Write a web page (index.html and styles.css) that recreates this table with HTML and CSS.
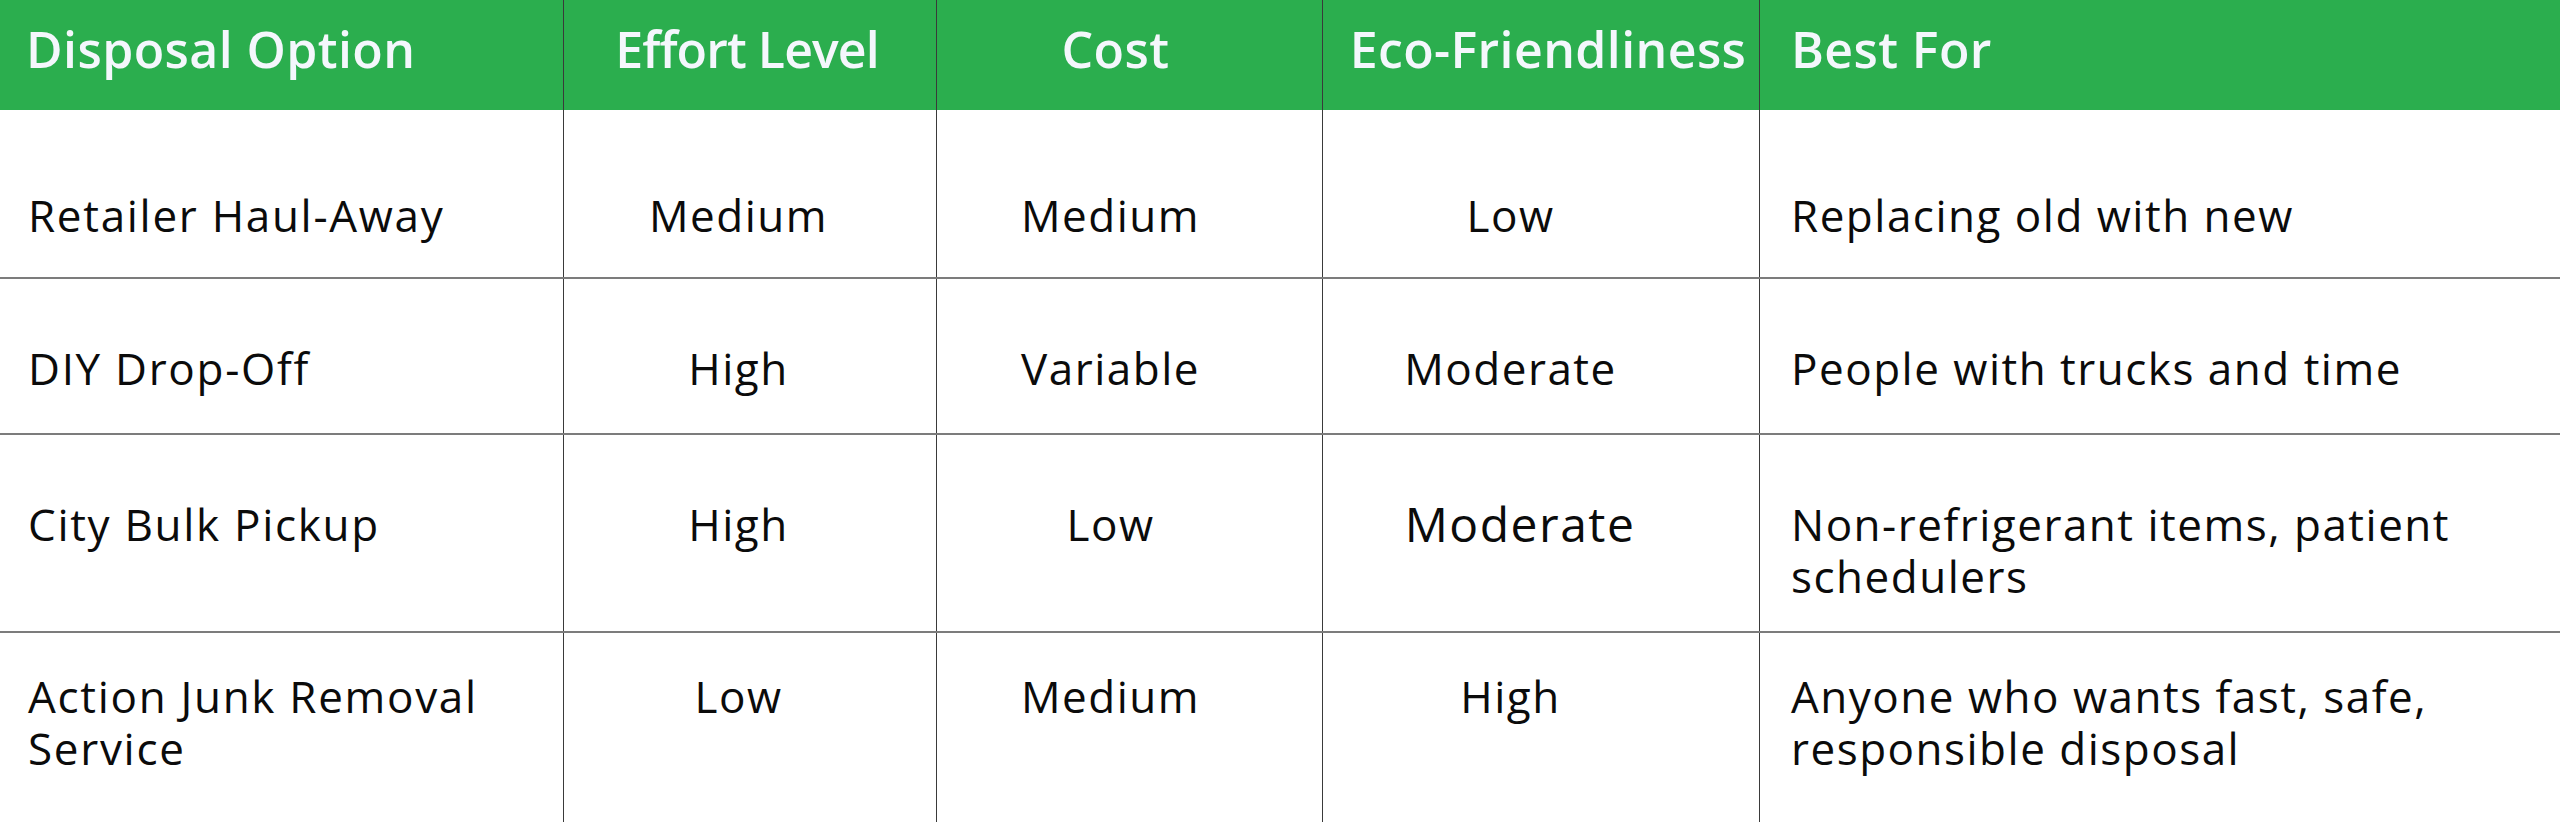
FILE: index.html
```html
<!DOCTYPE html>
<html lang="en">
<head>
<meta charset="utf-8">
<title>Disposal Options Comparison</title>
<link rel="stylesheet" href="styles.css">
</head>
<body>
<div class="tbl">
  <div class="row head">
    <div class="cell c1">Disposal Option</div>
    <div class="cell c2">Effort Level</div>
    <div class="cell c3">Cost</div>
    <div class="cell c4">Eco-Friendliness</div>
    <div class="cell c5">Best For</div>
  </div>
  <div class="row body r1">
    <div class="cell c1">Retailer Haul-Away</div>
    <div class="cell c2">Medium</div>
    <div class="cell c3">Medium</div>
    <div class="cell c4">Low</div>
    <div class="cell c5">Replacing old with new</div>
  </div>
  <div class="row body r2">
    <div class="cell c1">DIY Drop-Off</div>
    <div class="cell c2">High</div>
    <div class="cell c3">Variable</div>
    <div class="cell c4">Moderate</div>
    <div class="cell c5">People with trucks and time</div>
  </div>
  <div class="row body r3">
    <div class="cell c1">City Bulk Pickup</div>
    <div class="cell c2">High</div>
    <div class="cell c3">Low</div>
    <div class="cell c4 big">Moderate</div>
    <div class="cell c5">Non-refrigerant items, patient schedulers</div>
  </div>
  <div class="row body r4">
    <div class="cell c1">Action Junk Removal Service</div>
    <div class="cell c2">Low</div>
    <div class="cell c3">Medium</div>
    <div class="cell c4">High</div>
    <div class="cell c5">Anyone who wants fast, safe, responsible disposal</div>
  </div>
</div>
</body>
</html>
```
FILE: styles.css
```css
* { box-sizing: border-box; }
body {
  margin: 0;
  background: #ffffff;
  font-family: "Open Sans", "Noto Sans", sans-serif;
}
.tbl { width: 2560px; }
.row {
  display: grid;
  grid-template-columns: 564px 373px 386px 437px 1fr;
}
.cell { border-right: 1px solid #3a3a3a; }
.cell.c5 { border-right: 0; }
.c1 { padding-left: 28px; padding-right: 40px; }
.c2, .c3, .c4 { text-align: center; }
.c5 { padding-left: 31px; padding-right: 29px; }

.head {
  height: 110px;
  background: #2bae4e;
  color: #f4f7fc;
  font-weight: 600;
  font-size: 50px;
  line-height: 60px;
  letter-spacing: 0.4px;
}
.head .cell { padding-top: 19px; white-space: nowrap; }
.head .c1 { padding-left: 26px; }
.head .c2 { padding-right: 6px; letter-spacing: -0.9px; }
.head .c3 { padding-right: 28px; }
.head .c4 { padding-left: 14px; }

.body {
  font-size: 44px;
  line-height: 52px;
  letter-spacing: 1.5px;
  color: #0b0b0b;
  border-bottom: 2px solid #7c7c7c;
}
.body .c1 { letter-spacing: 1.7px; }
.body .c2 { padding-right: 23px; }
.body .c3 { padding-right: 38px; }
.body .c4 { padding-right: 61px; }
.body .big { font-size: 48px; padding-right: 42px; }

.r1 { height: 169px; }
.r1 .cell { padding-top: 79px; }
.r2 { height: 156px; }
.r2 .cell { padding-top: 63px; }
.r3 { height: 198px; }
.r3 .cell { padding-top: 63px; }
.r4 { height: 189px; border-bottom: 0; }
.r4 .cell { padding-top: 37px; }
```
